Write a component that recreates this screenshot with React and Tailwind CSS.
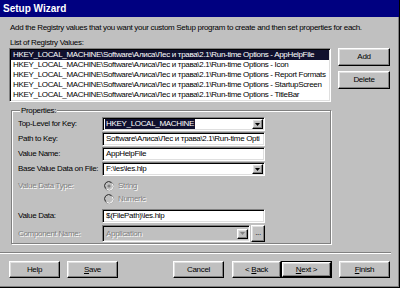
const sunken =
  "border border-t-[#808080] border-l-[#808080] border-b-white border-r-white shadow-[inset_1px_1px_0_#000,inset_-1px_-1px_0_#dfdfdf]";
const raised =
  "border border-t-white border-l-white border-b-black border-r-black shadow-[inset_-1px_-1px_0_#808080,inset_1px_1px_0_#dfdfdf] bg-[#c0c0c0]";
const disabledText = "text-[#808080] [text-shadow:1px_1px_0_#fff]";

const registryValues = [
  "HKEY_LOCAL_MACHINE\\Software\\Алиса\\Лес и трава\\2.1\\Run-time Options - AppHelpFile",
  "HKEY_LOCAL_MACHINE\\Software\\Алиса\\Лес и трава\\2.1\\Run-time Options - Icon",
  "HKEY_LOCAL_MACHINE\\Software\\Алиса\\Лес и трава\\2.1\\Run-time Options - Report Formats",
  "HKEY_LOCAL_MACHINE\\Software\\Алиса\\Лес и трава\\2.1\\Run-time Options - StartupScreen",
  "HKEY_LOCAL_MACHINE\\Software\\Алиса\\Лес и трава\\2.1\\Run-time Options - TitleBar",
];

function ArrowButton({ disabled }) {
  return (
    <div className={`${raised} w-[11px] h-[10px] mr-[1px] flex items-center justify-center shrink-0`}>
      <svg width="5" height="3" viewBox="0 0 5 3">
        <path d="M0 0h5L2.5 3z" fill={disabled ? "#808080" : "#000"} />
      </svg>
    </div>
  );
}

function Button({ children, className = "", isDefault = false }) {
  return (
    <div className={`h-[17px] shrink-0 ${isDefault ? "border border-black" : ""} ${className}`}>
      <div className={`${raised} h-full flex items-center justify-center`}>{children}</div>
    </div>
  );
}

function Radio({ checked }) {
  return (
    <svg width="10" height="10" viewBox="0 0 10 10" className="shrink-0">
      <circle cx="5" cy="5" r="4.5" fill="#c0c0c0" stroke="#808080" />
      <path d="M1.8 7.5A4 4 0 0 1 7.5 1.8" stroke="#404040" fill="none" />
      <path d="M8.4 2.8A4 4 0 0 1 2.8 8.4" stroke="#fff" fill="none" />
      {checked && <circle cx="5" cy="5" r="1.6" fill="#808080" />}
    </svg>
  );
}

function FieldRow({ label, disabled, children, className }) {
  return (
    <div className={`grid grid-cols-[84px_163px] items-center ${className}`}>
      <div className={`whitespace-nowrap ${disabled ? disabledText : ""}`}>{label}</div>
      <div className="flex h-full min-w-0">{children}</div>
    </div>
  );
}

export default function App() {
  return (
    <div className="w-[400px] h-[288px] bg-[#c0c0c0] border-r border-b border-black shadow-[inset_-1px_-1px_0_#808080] text-[8px] tracking-[-0.32px] text-black font-['Liberation_Sans',Arial,sans-serif] flex flex-col overflow-hidden">
      <div className="h-[17px] bg-[#000080] flex items-center pl-[3px] text-white text-[10px] font-bold tracking-normal shrink-0">
        Setup Wizard
      </div>

      <div className="mt-[5px] h-[11px] leading-[11px] pl-[10px] whitespace-nowrap">
        Add the Registry values that you want your custom Setup program to create and then set properties for each.
      </div>
      <div className="mt-[4px] h-[11px] leading-[11px] pl-[10px]">List of Registry Values:</div>

      <div className="flex items-start">
        <div className={`${sunken} bg-white ml-[9px] w-[322px] h-[54px] p-[1px] overflow-hidden`}>
          {registryValues.map((v, i) => (
            <div
              key={v}
              className={`h-[10px] leading-[10px] pl-[2px] whitespace-nowrap overflow-hidden ${i === 0 ? "bg-[#10102e] text-white" : ""}`}
            >
              {v}
            </div>
          ))}
        </div>
        <div className="ml-[7px] flex flex-col gap-[5px]">
          <Button className="w-[52px] h-[18px]">Add</Button>
          <Button className="w-[52px] h-[18px]">Delete</Button>
        </div>
      </div>

      <fieldset className="mt-[3px] ml-[11px] w-[320px] min-w-0 border border-[#808080] shadow-[1px_1px_0_#fff,inset_1px_1px_0_#fff] pl-[6px] pt-[1px] pb-[4px]">
        <legend className="ml-[2px] px-[1px] h-[11px] leading-[11px] bg-[#c0c0c0]">Properties:</legend>

        <FieldRow label="Top-Level for Key:" className="h-[14px] mb-[1px]">
          <div className={`${sunken} bg-white w-full h-full flex items-center justify-between pl-[2px]`}>
            <span className="bg-[#10102e] text-white leading-[10px] px-[1px]">HKEY_LOCAL_MACHINE</span>
            <ArrowButton />
          </div>
        </FieldRow>
        <FieldRow label="Path to Key:" className="h-[14px] mb-[1px]">
          <div className={`${sunken} bg-white w-full h-full flex items-center pl-[3px] overflow-hidden whitespace-nowrap`}>
            Software\Алиса\Лес и трава\2.1\Run-time Opti
          </div>
        </FieldRow>
        <FieldRow label="Value Name:" className="h-[14px] mb-[1px]">
          <div className={`${sunken} bg-white w-full h-full flex items-center pl-[3px]`}>AppHelpFile</div>
        </FieldRow>
        <FieldRow label="Base Value Data on File:" className="h-[14px] mb-[1px]">
          <div className={`${sunken} bg-white w-full h-full flex items-center justify-between pl-[3px]`}>
            <span>F:\les\les.hlp</span>
            <ArrowButton />
          </div>
        </FieldRow>

        <FieldRow label="Value Data Type:" disabled className="h-[13px] mt-[3px]">
          <div className="flex items-center gap-[4px] pl-[2px]">
            <Radio checked />
            <span className={disabledText}>String</span>
          </div>
        </FieldRow>
        <FieldRow label="" className="h-[13px]">
          <div className="flex items-center gap-[4px] pl-[2px]">
            <Radio />
            <span className={disabledText}>Numeric</span>
          </div>
        </FieldRow>

        <FieldRow label="Value Data:" className="h-[14px] mt-[4px]">
          <div className={`${sunken} bg-white w-full h-full flex items-center pl-[3px]`}>$(FilePath)\les.hlp</div>
        </FieldRow>
        <FieldRow label="Component Name:" disabled className="h-[14px] mt-[2px]">
          <div className={`${sunken} bg-[#c0c0c0] w-[148px] h-full flex items-center justify-between pl-[3px] shrink-0`}>
            <span className={disabledText}>Application</span>
            <ArrowButton disabled />
          </div>
          <Button className="w-[14px] h-[14px] ml-[1px]">
            <span className="leading-[8px] -mt-[2px]">...</span>
          </Button>
        </FieldRow>
      </fieldset>

      <div className="mt-[8px] w-[391px] h-[2px] border-t border-[#808080] border-b border-b-white" />

      <div className="mt-[7px] flex items-start">
        <Button className="w-[51px] ml-[9px]">Help</Button>
        <Button className="w-[51px] ml-[7px]">
          <span>
            <u>S</u>ave
          </span>
        </Button>
        <Button className="w-[51px] ml-[55px]">Cancel</Button>
        <Button className="w-[49px] ml-[8px]">
          <span>
            &lt; <u>B</u>ack
          </span>
        </Button>
        <Button className="w-[51px]" isDefault>
          <span>
            <u>N</u>ext &gt;
          </span>
        </Button>
        <Button className="w-[51px] ml-[7px]">
          <span>
            <u>F</u>inish
          </span>
        </Button>
      </div>
    </div>
  );
}
